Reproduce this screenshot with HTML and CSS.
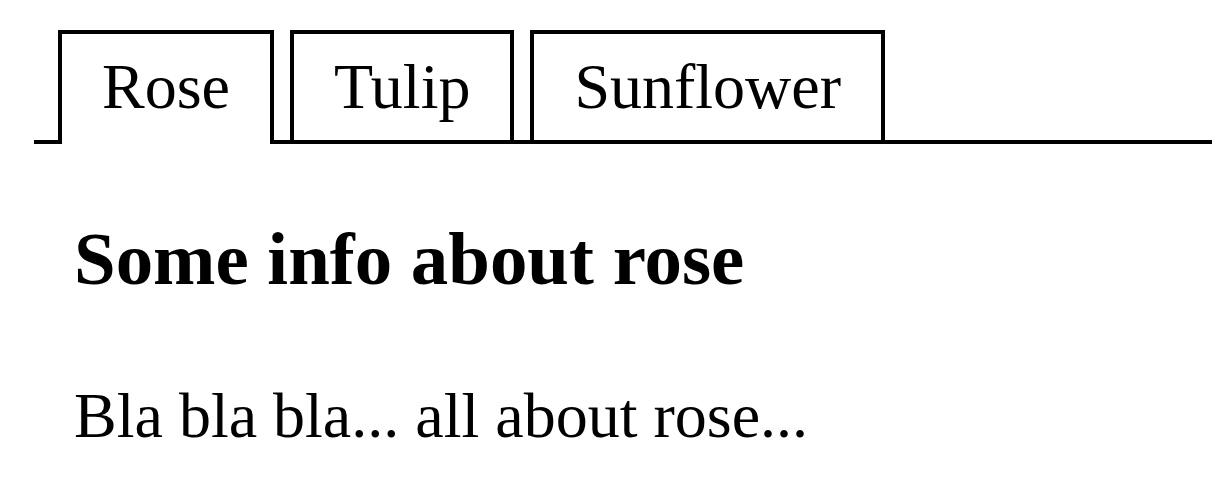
FILE: index.html
```html
<!DOCTYPE html>
<html lang="en">
<head>
<meta charset="utf-8">
<title>Flowers</title>
<link rel="stylesheet" href="styles.css">
</head>
<body>
<div class="tabs">
  <div class="tab active">Rose</div>
  <div class="tab">Tulip</div>
  <div class="tab">Sunflower</div>
</div>
<div class="content">
  <h3 class="title">Some info about rose</h3>
  <p class="text">Bla bla bla... all about rose...</p>
</div>
</body>
</html>
```

FILE: styles.css
```css
html, body {
  margin: 0;
  padding: 0;
  background: #fff;
  color: #000;
  font-family: "Liberation Serif", "Times New Roman", serif;
}

.tabs {
  display: flex;
  align-items: flex-end;
  gap: 16px;
  margin-left: 34px;
  padding: 30px 0 0 24px;
  border-bottom: 4px solid #000;
}

.tab {
  font-size: 64px;
  line-height: 74px;
  padding: 16px 40px;
  border: 4px solid #000;
  border-bottom: none;
  background: #fff;
}

.tab.active {
  padding-bottom: 20px;
  margin-bottom: -4px;
}

.content {
  padding-left: 74px;
}

.title {
  margin: 72px 0 0;
  font-size: 74.88px;
  line-height: 86px;
  font-weight: bold;
}

.text {
  margin: 77px 0 0;
  font-size: 64px;
  line-height: 74px;
}
```
